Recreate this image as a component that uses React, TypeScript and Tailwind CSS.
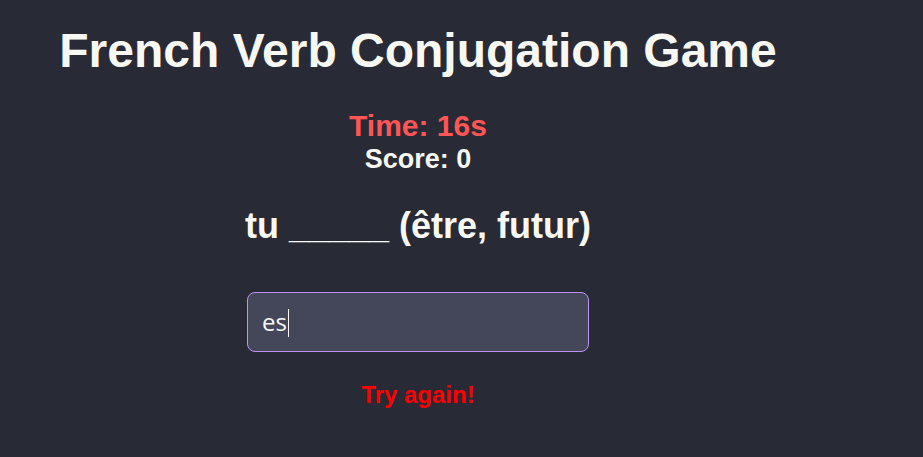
import React from "react";

export default function App() {
  return (
    <div className="min-h-[457px] w-full bg-[#282a36] text-[#f8f8f2] font-['Liberation_Sans',Arial,sans-serif]">
      <div className="w-[836px] flex flex-col items-center">
        <h1 className="mt-[23px] text-[48px] leading-[56px] font-bold whitespace-nowrap">
          French Verb Conjugation Game
        </h1>
        <div className="mt-[31px] text-[30px] leading-[32px] font-bold text-[#ff5555]">Time: 16s</div>
        <div className="mt-[3px] text-[27px] leading-[28px] font-bold">Score: 0</div>
        <div className="mt-[33px] text-[36px] leading-[40px] font-bold">tu _____ (être, futur)</div>
        <div
          role="textbox"
          className="mt-[46px] w-[342px] h-[60px] flex items-center px-[14px] rounded-[8px] border border-[#bd93f9] bg-[#44475a] text-[24px] font-['Open_Sans',sans-serif]"
        >
          <span>es</span>
          <span className="ml-[1px] mt-[2px] w-[1px] h-[28px] bg-[#f8f8f2]" />
        </div>
        <div className="mt-[29px] text-[24px] leading-[28px] font-bold text-[#ff0000]">Try again!</div>
      </div>
    </div>
  );
}
